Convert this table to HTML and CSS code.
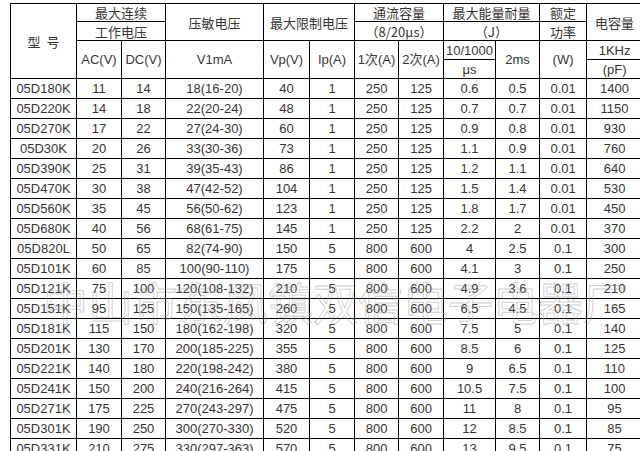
FILE: index.html
```html
<!DOCTYPE html>
<html lang="zh">
<head>
<meta charset="utf-8">
<title>压敏电阻参数表</title>
<link rel="stylesheet" href="styles.css">
</head>
<body>
<div class="page">
<table class="spec">
<colgroup>
<col class="c1"><col class="c2"><col class="c3"><col class="c4"><col class="c5"><col class="c6"><col class="c7"><col class="c8"><col class="c9"><col class="c10"><col class="c11"><col class="c12">
</colgroup>
<thead>
<tr class="h1">
<th rowspan="4" class="cn">型&nbsp;&nbsp;号</th>
<th colspan="2" class="cn">最大连续</th>
<th rowspan="2" class="cn">压敏电压</th>
<th colspan="2" rowspan="2" class="cn">最大限制电压</th>
<th colspan="2" class="cn">通流容量</th>
<th colspan="2" class="cn">最大能量耐量</th>
<th class="cn">额定</th>
<th rowspan="2" class="cn">电容量</th>
</tr>
<tr class="h2">
<th colspan="2" class="cn">工作电压</th>
<th colspan="2" class="cn">（8/20μs）</th>
<th colspan="2" class="cn">（J）</th>
<th class="cn">功率</th>
</tr>
<tr class="h3">
<th rowspan="2">AC(V)</th>
<th rowspan="2">DC(V)</th>
<th rowspan="2">V1mA</th>
<th rowspan="2">Vp(V)</th>
<th rowspan="2">Ip(A)</th>
<th rowspan="2">1次(A)</th>
<th rowspan="2">2次(A)</th>
<th>10/1000</th>
<th rowspan="2">2ms</th>
<th rowspan="2">(W)</th>
<th>1KHz</th>
</tr>
<tr class="h4">
<th>μs</th>
<th>(pF)</th>
</tr>
</thead>
<tbody>
<tr><td>05D180K</td><td>11</td><td>14</td><td>18(16-20)</td><td>40</td><td>1</td><td>250</td><td>125</td><td>0.6</td><td>0.5</td><td>0.01</td><td>1400</td></tr>
<tr><td>05D220K</td><td>14</td><td>18</td><td>22(20-24)</td><td>48</td><td>1</td><td>250</td><td>125</td><td>0.7</td><td>0.7</td><td>0.01</td><td>1150</td></tr>
<tr><td>05D270K</td><td>17</td><td>22</td><td>27(24-30)</td><td>60</td><td>1</td><td>250</td><td>125</td><td>0.9</td><td>0.8</td><td>0.01</td><td>930</td></tr>
<tr><td>05D30K</td><td>20</td><td>26</td><td>33(30-36)</td><td>73</td><td>1</td><td>250</td><td>125</td><td>1.1</td><td>0.9</td><td>0.01</td><td>760</td></tr>
<tr><td>05D390K</td><td>25</td><td>31</td><td>39(35-43)</td><td>86</td><td>1</td><td>250</td><td>125</td><td>1.2</td><td>1.1</td><td>0.01</td><td>640</td></tr>
<tr><td>05D470K</td><td>30</td><td>38</td><td>47(42-52)</td><td>104</td><td>1</td><td>250</td><td>125</td><td>1.5</td><td>1.4</td><td>0.01</td><td>530</td></tr>
<tr><td>05D560K</td><td>35</td><td>45</td><td>56(50-62)</td><td>123</td><td>1</td><td>250</td><td>125</td><td>1.8</td><td>1.7</td><td>0.01</td><td>450</td></tr>
<tr><td>05D680K</td><td>40</td><td>56</td><td>68(61-75)</td><td>145</td><td>1</td><td>250</td><td>125</td><td>2.2</td><td>2</td><td>0.01</td><td>370</td></tr>
<tr><td>05D820L</td><td>50</td><td>65</td><td>82(74-90)</td><td>150</td><td>5</td><td>800</td><td>600</td><td>4</td><td>2.5</td><td>0.1</td><td>300</td></tr>
<tr><td>05D101K</td><td>60</td><td>85</td><td>100(90-110)</td><td>175</td><td>5</td><td>800</td><td>600</td><td>4.1</td><td>3</td><td>0.1</td><td>250</td></tr>
<tr><td>05D121K</td><td>75</td><td>100</td><td>120(108-132)</td><td>210</td><td>5</td><td>800</td><td>600</td><td>4.9</td><td>3.6</td><td>0.1</td><td>210</td></tr>
<tr><td>05D151K</td><td>95</td><td>125</td><td>150(135-165)</td><td>260</td><td>5</td><td>800</td><td>600</td><td>6.5</td><td>4.5</td><td>0.1</td><td>165</td></tr>
<tr><td>05D181K</td><td>115</td><td>150</td><td>180(162-198)</td><td>320</td><td>5</td><td>800</td><td>600</td><td>7.5</td><td>5</td><td>0.1</td><td>140</td></tr>
<tr><td>05D201K</td><td>130</td><td>170</td><td>200(185-225)</td><td>355</td><td>5</td><td>800</td><td>600</td><td>8.5</td><td>6</td><td>0.1</td><td>125</td></tr>
<tr><td>05D221K</td><td>140</td><td>180</td><td>220(198-242)</td><td>380</td><td>5</td><td>800</td><td>600</td><td>9</td><td>6.5</td><td>0.1</td><td>110</td></tr>
<tr><td>05D241K</td><td>150</td><td>200</td><td>240(216-264)</td><td>415</td><td>5</td><td>800</td><td>600</td><td>10.5</td><td>7.5</td><td>0.1</td><td>100</td></tr>
<tr><td>05D271K</td><td>175</td><td>225</td><td>270(243-297)</td><td>475</td><td>5</td><td>800</td><td>600</td><td>11</td><td>8</td><td>0.1</td><td>95</td></tr>
<tr><td>05D301K</td><td>190</td><td>250</td><td>300(270-330)</td><td>520</td><td>5</td><td>800</td><td>600</td><td>12</td><td>8.5</td><td>0.1</td><td>85</td></tr>
<tr><td>05D331K</td><td>210</td><td>275</td><td>330(297-363)</td><td>570</td><td>5</td><td>800</td><td>600</td><td>13</td><td>9.5</td><td>0.1</td><td>75</td></tr>
</tbody>
</table>
<div class="watermark">中山市东凤镇双信电子电器厂</div>
</div>
</body>
</html>
```
FILE: styles.css
```css
html, body {
  margin: 0;
  padding: 0;
  background: #fff;
  overflow: hidden;
}
.page {
  position: relative;
  width: 640px;
  height: 451px;
  overflow: hidden;
  padding: 3px 0 0 10px;
  box-sizing: border-box;
}
.spec {
  border-collapse: collapse;
  table-layout: fixed;
  width: 632px;
  font-family: "Liberation Sans", Arial, "Noto Sans CJK SC", sans-serif;
  font-size: 13px;
  color: #363636;
}
.c1 { width: 66px; }
.c2 { width: 45px; }
.c3 { width: 44px; }
.c4 { width: 98px; }
.c5 { width: 46px; }
.c6 { width: 45px; }
.c7 { width: 44px; }
.c8 { width: 45px; }
.c9 { width: 52px; }
.c10 { width: 44px; }
.c11 { width: 47px; }
.c12 { width: 56px; }
.spec th, .spec td {
  border: 1px solid #000;
  padding: 0;
  text-align: center;
  vertical-align: middle;
  font-weight: normal;
  line-height: 1;
  white-space: nowrap;
  overflow: hidden;
}
.spec th.cn {
  font-family: "Noto Sans CJK SC", sans-serif;
  font-size: 13px;
}
.h1 { height: 18px; }
.h2 { height: 19px; }
.h3 { height: 19px; }
.h4 { height: 19px; }
.spec tbody tr { height: 20px; }
.watermark {
  position: absolute;
  left: 43px;
  top: 279px;
  font-family: "Noto Sans CJK SC", sans-serif;
  font-size: 45px;
  line-height: 1;
  white-space: nowrap;
  color: transparent;
  -webkit-text-stroke: 1px rgba(150, 150, 150, 0.45);
  pointer-events: none;
}
```
